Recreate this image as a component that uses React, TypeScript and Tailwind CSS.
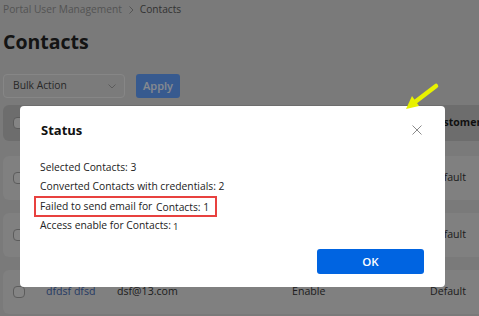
import React from "react"

type Row = {
  name: string
  email: string
  status: string
  type: string
}

const rows: Row[] = [
  { name: "test test", email: "test@test.com", status: "Enable", type: "Default" },
  { name: "abc abc", email: "abc@abc.com", status: "Enable", type: "Default" },
  { name: "dfdsf dfsd", email: "dsf@13.com", status: "Enable", type: "Default" },
]

function Checkbox() {
  return <span className="block h-[12px] w-[12px] rounded-[4px] border border-[#9a9a9a] bg-[#dcdcdc]" />
}

function ContactsPage() {
  return (
    <div className="px-[3px]">
      {/* breadcrumb */}
      <div className="flex h-[20px] items-center gap-[5px] text-[10.2px] text-[#8c8c8c]">
        <span>Portal User Management</span>
        <svg className="h-[8px] w-[8px]" viewBox="0 0 8 8" fill="none" stroke="currentColor" strokeWidth="1">
          <path d="M2.5 0.5 L6 4 L2.5 7.5" />
        </svg>
        <span className="text-[#555]">Contacts</span>
      </div>
      <h1 className="mt-[8px] h-[28px] text-[19.5px] font-bold leading-[28px] text-[#222]">Contacts</h1>

      <div className="mt-[18px] flex h-[24px] items-center gap-[11px]">
        <div className="flex h-[24px] w-[122px] items-center justify-between rounded-[4px] border border-[#e0e0e0] bg-[#cdcdcd] pl-[9px] pr-[8px] text-[10.3px] text-[#444]">
          <span>Bulk Action</span>
          <svg className="h-[8px] w-[8px] text-[#999]" viewBox="0 0 8 8" fill="none" stroke="currentColor" strokeWidth="1">
            <path d="M0.5 2.5 L4 6 L7.5 2.5" />
          </svg>
        </div>
        <button className="h-[24px] w-[44px] rounded-[3px] bg-[#5c96ee] text-[11px] font-semibold text-[#e0e6f0]">
          Apply
        </button>
      </div>

      {/* table */}
      <div className="mt-[7px] w-[540px]">
        <div className="flex h-[36px] items-center rounded-l-[6px] bg-[#b6b6b6] pl-[10px] text-[10.5px] font-bold text-[#1c1c1c]">
          <Checkbox />
          <span className="ml-[21px] w-[71px]">Name</span>
          <span className="w-[175px]">Email</span>
          <span className="w-[138px]">Status</span>
          <span>Customer Type</span>
        </div>
        <div className="mt-[15px] flex flex-col gap-[13px]">
          {rows.map((r, i) => (
            <div
              key={`row-${i}`}
              className="flex h-[44px] items-center rounded-l-[6px] bg-[#d5d5d5] pl-[10px] text-[10.6px] text-[#333]"
            >
              <Checkbox />
              <span className="ml-[21px] w-[71px] text-[#3f63a8]">{r.name}</span>
              <span className="w-[175px]">{r.email}</span>
              <span className="w-[138px]">{r.status}</span>
              <span>{r.type}</span>
            </div>
          ))}
        </div>
      </div>
    </div>
  )
}

function StatusModal() {
  return (
    <div className="absolute left-[20px] top-[106px] flex h-[181px] w-[425px] flex-col rounded-[4px] bg-white">
      <div className="flex items-center justify-between pl-[21px] pr-[23px] pt-[15px]">
        <h2 className="text-[13px] font-bold leading-[18px] text-[#111]">Status</h2>
        <svg className="h-[10px] w-[10px] text-[#8a8a8a]" viewBox="0 0 10 10" fill="none" stroke="currentColor" strokeWidth="1">
          <path d="M0.5 0.5 L9.5 9.5 M9.5 0.5 L0.5 9.5" />
        </svg>
      </div>
      <div className="mt-[19px] pl-[20px] text-[10.3px] leading-[19px] text-[#222]">
        <div>Selected Contacts: 3</div>
        <div>Converted Contacts with credentials: 2</div>
        <div className="-ml-[6px] w-fit border-2 border-[#e8413f] pl-[4px] pr-[6px] leading-[16px]">
          Failed to send email for <span className="ml-[1px] align-[-1px]">Contacts: 1</span>
        </div>
        <div className="leading-[17px]">
          Access enable for Contacts:<span className="ml-[2px] align-[-1px] text-[9.5px]">1</span>
        </div>
      </div>
      <div className="mt-auto flex justify-end pb-[13px] pr-[21px]">
        <button className="h-[25px] w-[107px] rounded-[3px] bg-[#0064e1] text-[11.5px] font-semibold text-white">
          OK
        </button>
      </div>
    </div>
  )
}

export default function App() {
  return (
    <div className="relative h-[316px] w-[479px] overflow-hidden bg-[#cbcbcb] font-['Open_Sans',sans-serif]">
      <ContactsPage />
      <div className="absolute inset-0 bg-black/40" />
      <StatusModal />
      {/* annotation arrow */}
      <svg className="absolute left-[400px] top-[80px] h-[35px] w-[45px]" viewBox="0 0 45 35">
        <path d="M36 6 L15 22" stroke="#e8f200" strokeWidth="4.5" strokeLinecap="round" />
        <path d="M6 29 L19 26 L12 16 Z" fill="#e8f200" />
      </svg>
    </div>
  )
}
